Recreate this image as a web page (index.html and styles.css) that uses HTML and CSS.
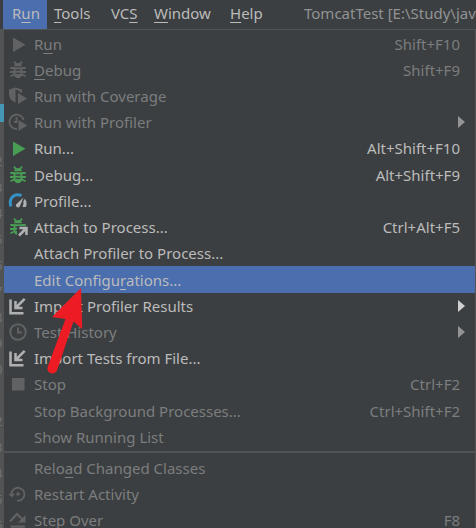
FILE: index.html
```html
<!DOCTYPE html>
<html lang="en">
<head>
<meta charset="utf-8">
<title>TomcatTest</title>
<link rel="stylesheet" href="styles.css">
</head>
<body>
<svg class="defs" width="0" height="0" aria-hidden="true">
  <symbol id="play" viewBox="0 0 20 20"><path d="M5 3.5V18L17.5 10.7Z"/></symbol>
  <symbol id="bug" viewBox="0 0 20 20"><path d="M6 6.2C6.4 4 8 2.9 10 2.9s3.600 1.100 4 3.300z"/><path d="M5.500 7.300h9V13c0 3-2 5.200-4.500 5.200S5.500 16 5.500 13z"/><path d="M6 1.700 8 4M14 1.700 12 4M2.300 8H6m8 0h3.700M2 12h4m8 0h4M2.500 16.200 6 14.500m8 0 3.500 1.700" fill="none" stroke="currentColor" stroke-width="1.800"/><path d="M7.500 10h5M7.500 13.300h5" stroke="#3c3f41" stroke-width="1.300"/></symbol>
  <symbol id="coverage" viewBox="0 0 20 20"><path d="M1 3.500 7.500 1.500 14 3.500V7l-3-1.500V4.500L7.500 3.500V16.500C3.500 15 1 12 1 8z"/><path d="M10 7v11l9-5.500z"/></symbol>
  <symbol id="clockrun" viewBox="0 0 20 20"><path d="M9 17A7.200 7.200 0 1 1 15.700 8M8.500 5v5H6" fill="none" stroke="currentColor" stroke-width="1.900"/><path d="M10.500 8v11l8.700-5.500z"/></symbol>
  <symbol id="gauge" viewBox="0 0 20 20"><path d="M3 15.500C.5 8 5 3.800 10 3.800q2 0 3.500.9" fill="none" stroke="#3592c4" stroke-width="3"/><path d="M15.500 6.500 12 15a2 2 0 0 1-4-1.500zM16.800 7.800q3 4 1 8.200h-3.300q1.500-4 .8-5.500z" fill="#afb1b3"/></symbol>
  <symbol id="import" viewBox="0 0 20 20"><path d="M2.500 3.500v13.700H15.500M16.700 2.800 8.500 11M7.500 5v7h7" fill="none" stroke="currentColor" stroke-width="2.500"/></symbol>
  <symbol id="clock" viewBox="0 0 20 20"><path d="M10 2.200a7.800 7.800 0 1 1 0 15.600a7.800 7.800 0 1 1 0-15.600M10 5.500v5h4" fill="none" stroke="currentColor" stroke-width="2"/></symbol>
  <symbol id="stop" viewBox="0 0 20 20"><path d="M4 4h12.500v12.500H4z"/></symbol>
  <symbol id="restart" viewBox="0 0 20 20"><path d="M3.500 12V9.500A6.500 6.500 0 1 1 9 16.700" fill="none" stroke="currentColor" stroke-width="1.800"/><path d="M.5 9.800h6.500L3.700 13.500z"/><circle cx="10" cy="10" r="1.700"/></symbol>
  <symbol id="over" viewBox="0 0 20 20"><path d="M2 11.500 9 4l6 6" fill="none" stroke="currentColor" stroke-width="2.200"/><path d="M17.500 5v7.500H10zM2.500 15.500h14.500v2.200H2.500z"/></symbol>
  <symbol id="attacharrow" viewBox="0 0 20 20"><path d="M9 9h11v11H9z" fill="#3c3f41"/><path d="M11 18.500 17 12.500M11.500 11h7v7" fill="none" stroke="#afb1b3" stroke-width="2.500"/></symbol>
</svg>
<div class="window">
  <div class="menubar">
    <span class="tab open">R<u>u</u>n</span><span class="tab tools"><u>T</u>ools</span><span class="tab vcs">VC<u>S</u></span><span class="tab win"><u>W</u>indow</span><span class="tab help"><u>H</u>elp</span><span class="title">TomcatTest [E:\Study\java</span>
  </div>
  <div class="body">
    <div class="gutter"><i class="mark"></i><span class="nums">1<br>2<br>3<br>4<br>5<br>6<br>7<br>8<br>9<br>0<br>1<br>2<br>3<br>4<br>5<br>6</span></div>
    <div class="menu">
      <div class="row off"><svg class="ico"><use href="#play"/></svg><span>R<u>u</u>n</span><kbd>Shift+F10</kbd></div>
      <div class="row off"><svg class="ico"><use href="#bug"/></svg><span><u>D</u>ebug</span><kbd>Shift+F9</kbd></div>
      <div class="row off"><svg class="ico"><use href="#coverage"/></svg><span>Run with Coverage</span></div>
      <div class="row off"><svg class="ico"><use href="#clockrun"/></svg><span>Run with Profiler</span><i class="sub"></i></div>
      <div class="row"><svg class="ico green"><use href="#play"/></svg><span>Run...</span><kbd>Alt+Shift+F10</kbd></div>
      <div class="row"><svg class="ico green"><use href="#bug"/></svg><span>Debug...</span><kbd>Alt+Shift+F9</kbd></div>
      <div class="row"><svg class="ico"><use href="#gauge"/></svg><span>Profile...</span></div>
      <div class="row"><svg class="ico green"><use href="#bug"/><use href="#attacharrow"/></svg><span>Attach to Process...</span><kbd>Ctrl+Alt+F5</kbd></div>
      <div class="row"><i class="ico"></i><span>Attach Profiler to Process...</span></div>
      <div class="row selected"><i class="ico"></i><span>Edit Configu<u>r</u>ations...</span></div>
      <div class="row"><svg class="ico"><use href="#import"/></svg><span>Import Profiler Results</span><i class="sub"></i></div>
      <div class="row off"><svg class="ico"><use href="#clock"/></svg><span>Test History</span><i class="sub"></i></div>
      <div class="row"><svg class="ico"><use href="#import"/></svg><span>Import Tests from File...</span></div>
      <div class="row off"><svg class="ico"><use href="#stop"/></svg><span>Stop</span><kbd>Ctrl+F2</kbd></div>
      <div class="row off"><i class="ico"></i><span>Stop Background Processes...</span><kbd>Ctrl+Shift+F2</kbd></div>
      <div class="row off"><i class="ico"></i><span>Show Running List</span></div>
      <div class="sep"></div>
      <div class="row off"><i class="ico"></i><span>Relo<u>a</u>d Changed Classes</span></div>
      <div class="row off"><svg class="ico"><use href="#restart"/></svg><span>Restart Activity</span></div>
      <div class="row off"><svg class="ico"><use href="#over"/></svg><span>Step <u>O</u>ver</span><kbd>F8</kbd></div>
    </div>
  </div>
  <svg class="pointer" viewBox="0 0 40 96"><path d="M33.500 3 34.700 44 26 36.500 9.500 85.500A5 5 0 0 1 .3 81.500L18 34 4.500 32Z"/></svg>
</div>
</body>
</html>
```
FILE: styles.css
```css
* { box-sizing: border-box; }
body { margin: 0; }
.defs { position: absolute; }
.window {
  position: relative;
  width: 476px;
  height: 528px;
  overflow: hidden;
  background: #3c3f41;
  color: #bbbbbb;
  font: 15px/26px "Noto Sans", "Open Sans", sans-serif;
  white-space: nowrap;
}
u {
  text-decoration: underline;
  text-decoration-skip-ink: none;
  text-decoration-thickness: 1px;
  text-underline-offset: 3px;
}
.menubar {
  display: flex;
  height: 30px;
  padding-left: 3px;
  border-bottom: 1px solid #515354;
}
.tab { flex: none; }
.open { width: 44px; height: 29px; padding-left: 9px; background: #4b6eaf; }
.tools { width: 57px; padding-left: 7px; }
.vcs { width: 43px; padding-left: 7px; }
.win { width: 76px; padding-left: 7px; }
.help { width: 81px; padding-left: 7px; }
.title { color: #919394; }
.body { display: flex; height: 498px; }
.gutter {
  width: 4px;
  flex: none;
  overflow: hidden;
  background: #515354;
  color: #707375;
}
.mark { display: block; height: 18px; margin-top: 74px; background: #4598b5; }
.nums { display: block; margin-left: -5px; font-size: 13px; line-height: 26px; }
.menu { flex: 1; border-right: 1px solid #515354; padding-top: .5px; }
.row {
  display: flex;
  align-items: center;
  height: 26.23px;
  padding: 0 15px 0 4px;
}
.ico { width: 20px; height: 20px; flex: none; margin-right: 6px; color: #afb1b3; fill: currentColor; }
.green { color: #499c54; }
.off { color: #7b7d7e; }
.off .ico { color: #606263; }
.selected { background: #4b6eaf; }
kbd { margin-left: auto; font: inherit; }
.sub {
  margin: 0 -5px 0 auto;
  border: solid transparent;
  border-width: 6px 0 6px 7px;
  border-left-color: #d0d0d0;
}
.off .sub { border-left-color: #929495; }
.sep { height: 2px; margin: 1px 0 1.4px; background: #515354; }
.pointer { position: absolute; left: 45px; top: 285px; width: 45px; height: 96px; fill: #ed1c24; }
```
